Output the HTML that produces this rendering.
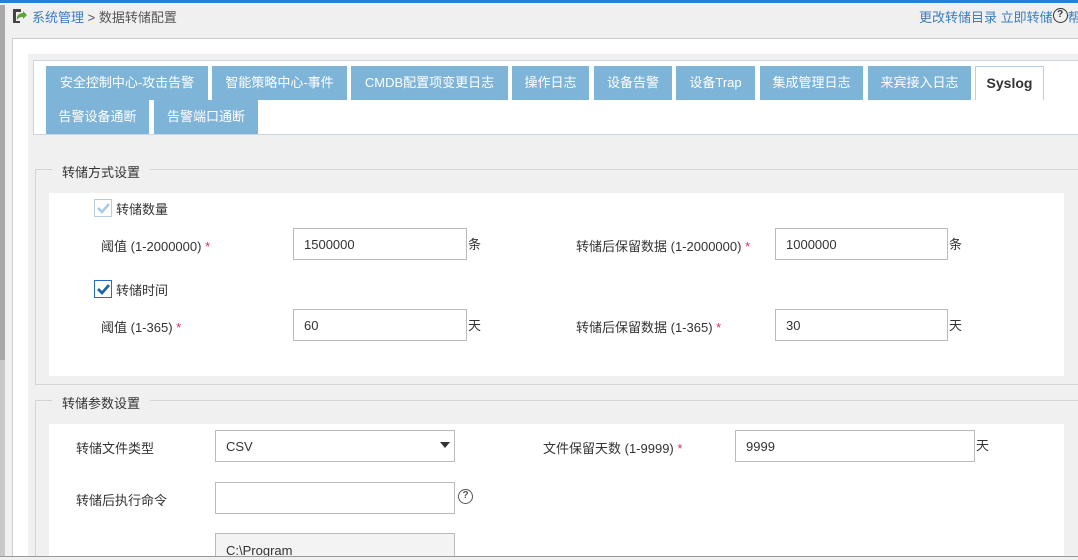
<!DOCTYPE html>
<html><head><meta charset="utf-8"><style>
*{box-sizing:border-box;margin:0;padding:0}
html,body{width:1078px;height:560px;overflow:hidden}
body{background:#f0f0f0;position:relative;font-family:"Liberation Sans","Noto Sans CJK SC",sans-serif;font-size:13px;color:#333}
#w{position:absolute;left:0;top:0;width:1078px;height:560px;overflow:hidden}
.a{position:absolute}
.tab{position:absolute;background:#7eb4d8;color:#fff;text-align:center;line-height:34px;font-size:13px;white-space:nowrap}
.inp{position:absolute;background:#fff;border:1px solid #bbb;height:32px;line-height:32px;padding-left:10px;color:#333}
.lbl{position:absolute;white-space:nowrap}
.st{color:#d2325a}
.q{display:inline-block;width:15px;height:15px;border:1.5px solid #333;border-radius:50%;font-size:10px;line-height:12px;text-align:center;font-weight:bold;vertical-align:top;margin-top:1px}
</style></head><body><div id="w">
<div class="a" style="left:0;top:0;width:1078px;height:3px;background:#2a7fd0"></div>
<div class="a" style="left:0;top:5px;width:5px;height:551px;background:#a8a8a8"></div>
<div class="a" style="left:0;top:360px;width:5px;height:196px;background:#c8c8c8"></div>
<svg class="a" style="left:11px;top:8px" width="16" height="16" viewBox="0 0 16 16"><path d="M2 1h8v3H5v9h4v2H2z" fill="#444"/><path d="M6 9c1-3 4-4 6-4V3l4 4-4 4V9c-2 0-4 0-6 3z" fill="#5aa832"/></svg>
<div class="lbl" style="left:32px;top:7px;color:#3a7dc0">系统管理 <span style="color:#555">&gt; 数据转储配置</span></div>
<div class="lbl" style="left:919px;top:7px;color:#3a7dc0">更改转储目录 立即转储<span class="q" style="color:#333">?</span>帮</div>
<div class="a" style="left:12px;top:38px;width:1066px;height:518px;background:#fff;border:1px solid #ccc;border-right:none;border-bottom:none"></div>
<div class="a" style="left:28px;top:54px;width:1050px;height:502px;background:#f0f0f0"></div>
<div class="a" style="left:33px;top:60px;width:1045px;height:75px;background:#fff;border:1px solid #ccd4dc;border-right:none"></div>
<div class="tab" style="left:46px;top:66px;width:162px">安全控制中心-攻击告警</div>
<div class="tab" style="left:212px;top:66px;width:135px">智能策略中心-事件</div>
<div class="tab" style="left:351px;top:66px;width:157px">CMDB配置项变更日志</div>
<div class="tab" style="left:512px;top:66px;width:77px">操作日志</div>
<div class="tab" style="left:594px;top:66px;width:78px">设备告警</div>
<div class="tab" style="left:676px;top:66px;width:79px">设备Trap</div>
<div class="tab" style="left:760px;top:66px;width:103px">集成管理日志</div>
<div class="tab" style="left:868px;top:66px;width:103px">来宾接入日志</div>
<div class="tab" style="left:975px;top:66px;width:69px;background:#fff;color:#333;font-weight:bold;border:1px solid #b8d0e4;border-bottom:none;line-height:33px;font-size:14px">Syslog</div>
<div class="tab" style="left:46px;top:100px;width:103px">告警设备通断</div>
<div class="tab" style="left:154px;top:100px;width:104px">告警端口通断</div>
<div class="a" style="left:35px;top:169px;width:1043px;height:216px;border:1px solid #d4d4d4;border-right:none"></div>
<div class="lbl" style="left:52px;top:162px;background:#f0f0f0;padding:0 10px">转储方式设置</div>
<div class="a" style="left:49px;top:193px;width:1015px;height:183px;background:#fff"></div>
<div class="a" style="left:94px;top:199px;width:18px;height:18px;border:1px solid #bcd;background:#fff"></div>
<svg class="a" style="left:96px;top:201px" width="14" height="14"><path d="M2 7l4 4 7-8" stroke="#a9c8ea" stroke-width="2.5" fill="none"/></svg>
<div class="lbl" style="left:116px;top:199px">转储数量</div>
<div class="lbl" style="left:101px;top:236px">阈值 (1-2000000) <span class="st">*</span></div>
<div class="inp" style="left:293px;top:228px;width:174px">1500000</div>
<div class="lbl" style="left:468px;top:234px">条</div>
<div class="lbl" style="left:576px;top:236px">转储后保留数据 (1-2000000) <span class="st">*</span></div>
<div class="inp" style="left:775px;top:228px;width:173px">1000000</div>
<div class="lbl" style="left:949px;top:234px">条</div>
<div class="a" style="left:94px;top:280px;width:18px;height:18px;border:1px solid #2a6cb8;background:#fff"></div>
<svg class="a" style="left:96px;top:282px" width="14" height="14"><path d="M2 7l4 4 7-8" stroke="#1f62b0" stroke-width="2.8" fill="none"/></svg>
<div class="lbl" style="left:116px;top:280px">转储时间</div>
<div class="lbl" style="left:101px;top:317px">阈值 (1-365) <span class="st">*</span></div>
<div class="inp" style="left:293px;top:309px;width:174px">60</div>
<div class="lbl" style="left:468px;top:315px">天</div>
<div class="lbl" style="left:576px;top:317px">转储后保留数据 (1-365) <span class="st">*</span></div>
<div class="inp" style="left:775px;top:309px;width:173px">30</div>
<div class="lbl" style="left:949px;top:315px">天</div>
<div class="a" style="left:35px;top:400px;width:1043px;height:156px;border-top:1px solid #d4d4d4;border-left:1px solid #d4d4d4"></div>
<div class="lbl" style="left:52px;top:393px;background:#f0f0f0;padding:0 10px">转储参数设置</div>
<div class="a" style="left:49px;top:424px;width:1015px;height:132px;background:#fff"></div>
<div class="lbl" style="left:76px;top:438px">转储文件类型</div>
<div class="inp" style="left:215px;top:430px;width:240px">CSV</div>
<svg class="a" style="left:440px;top:442px" width="10" height="6"><path d="M0 0h10L5 6z" fill="#333"/></svg>
<div class="lbl" style="left:543px;top:438px">文件保留天数 (1-9999) <span class="st">*</span></div>
<div class="inp" style="left:735px;top:430px;width:240px">9999</div>
<div class="lbl" style="left:976px;top:435px">天</div>
<div class="lbl" style="left:76px;top:490px">转储后执行命令</div>
<div class="inp" style="left:215px;top:482px;width:240px"></div>
<div class="a" style="left:458px;top:489px;width:15px;height:15px;border:1.5px solid #555;border-radius:50%;font-size:10px;line-height:12px;text-align:center;font-weight:bold;color:#555">?</div>
<div class="inp" style="left:215px;top:533px;width:240px;height:23px;background:#f3f3f3;line-height:34px;border-bottom:none;overflow:hidden">C:\Program</div>
<div class="a" style="left:0;top:556px;width:1078px;height:4px;background:#f0f0f0;border-top:1px solid #999"></div>
</div></body></html>
